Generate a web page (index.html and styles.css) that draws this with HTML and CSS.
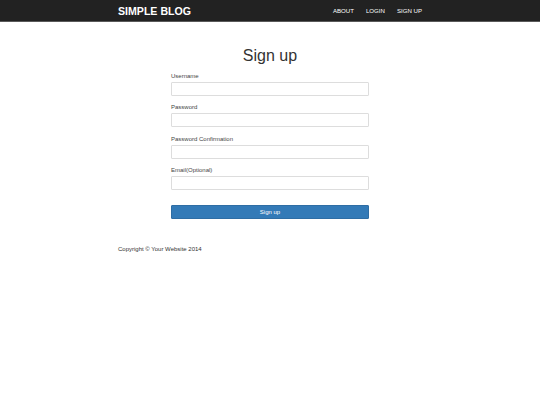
FILE: index.html
```html
<!DOCTYPE html>
<html>
<head>
<meta charset="utf-8">
<link rel="stylesheet" href="styles.css">
</head>
<body>
<nav class="navbar">
  <div class="container nav-inner">
    <a class="brand" href="#">SIMPLE BLOG</a>
    <ul class="nav-links">
      <li><a href="#">ABOUT</a></li>
      <li><a href="#">LOGIN</a></li>
      <li><a href="#">SIGN UP</a></li>
    </ul>
  </div>
</nav>
<main class="container">
  <div class="form-col">
    <h1 class="title">Sign up</h1>
    <form class="form">
      <div class="field">
        <label>Username</label>
        <input type="text">
      </div>
      <div class="field">
        <label>Password</label>
        <input type="password">
      </div>
      <div class="field">
        <label>Password Confirmation</label>
        <input type="password">
      </div>
      <div class="field">
        <label>Email(Optional)</label>
        <input type="text">
      </div>
      <button type="button" class="btn">Sign up</button>
    </form>
  </div>
  <footer class="footer">Copyright © Your Website 2014</footer>
</main>
</body>
</html>
```
FILE: styles.css
```css
* { box-sizing: border-box; }
body {
  margin: 0;
  font-family: "Liberation Sans", Arial, sans-serif;
  color: #333;
  background: #fff;
}
.container {
  width: 304px;
  margin: 0 auto;
}
.navbar {
  background: #222;
  height: 22px;
  border-bottom: 1px solid #5a5a5a;
}
.nav-inner {
  display: flex;
  justify-content: space-between;
  align-items: center;
  height: 21px;
}
.brand {
  color: #fff;
  font-weight: bold;
  font-size: 10.6px;
  line-height: 12px;
  text-decoration: none;
}
.nav-links {
  list-style: none;
  margin: 0;
  padding: 0;
  display: flex;
  gap: 12px;
  font-size: 6.1px;
  line-height: 8px;
}
.nav-links a {
  color: #fff;
  text-decoration: none;
}
.form-col {
  width: 198px;
  margin: 0 auto 0 53px;
}
.title {
  font-weight: normal;
  font-size: 16px;
  text-align: center;
  margin: 24px 0 6px;
  line-height: 20px;
}
.field {
  display: flex;
  flex-direction: column;
  margin-bottom: 7.3px;
}
.field label {
  font-size: 6px;
  line-height: 8px;
  margin-bottom: 2px;
  color: #444;
}
.field input {
  height: 14px;
  border: 1px solid #ddd;
  border-radius: 1px;
  padding: 0 4px;
  font-size: 6px;
}
.btn {
  display: block;
  width: 100%;
  height: 14px;
  margin-top: 15px;
  background: #337ab7;
  border: 1px solid #2e6da4;
  border-radius: 1px;
  color: #fff;
  font-family: inherit;
  font-size: 6px;
  padding: 0;
}
.footer {
  font-size: 6px;
  margin-top: 27px;
}
```
